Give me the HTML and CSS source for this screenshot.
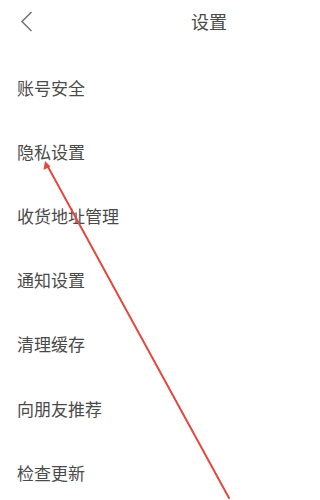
FILE: index.html
```html
<!DOCTYPE html>
<html lang="zh-CN">
<head>
<meta charset="utf-8">
<link rel="stylesheet" href="styles.css">
</head>
<body>
<div class="page">
  <header class="topbar">
    <svg class="back" width="13" height="21" viewBox="0 0 13 21"><path d="M11.5 1 L2 10.5 L11.5 20" fill="none" stroke="#777" stroke-width="1.6"/></svg>
    <div class="title">设置</div>
  </header>
  <ul class="menu">
    <li>账号安全</li>
    <li>隐私设置</li>
    <li>收货地址管理</li>
    <li>通知设置</li>
    <li>清理缓存</li>
    <li>向朋友推荐</li>
    <li>检查更新</li>
  </ul>
  <svg class="annot" width="273" height="500" viewBox="0 0 273 500">
    <line x1="47" y1="165" x2="229" y2="498" stroke="#e04a40" stroke-width="2" stroke-linecap="round"/>
    <path d="M45 161 L43.5 170 L50.5 166.5 Z" fill="#e04a40"/>
  </svg>
</div>
</body>
</html>
```
FILE: styles.css
```css
html, body {
  margin: 0;
  padding: 0;
  background: #fff;
}
.page {
  position: relative;
  width: 273px;
  height: 500px;
  overflow: hidden;
  font-family: "Noto Sans CJK SC", "Noto Sans", sans-serif;
  color: #4a4a4a;
}
.topbar {
  height: 42px;
  display: flex;
  align-items: center;
  padding-left: 20px;
}
.back {
  display: block;
}
.title {
  margin-left: 158px;
  font-size: 18px;
  color: #4a4a4a;
  line-height: 1;
}
.menu {
  list-style: none;
  margin: 13px 0 0;
  padding: 0;
}
.menu li {
  height: 64.2px;
  display: flex;
  align-items: center;
  padding-left: 17px;
  font-size: 17px;
  line-height: 1;
}
.annot {
  position: absolute;
  left: 0;
  top: 0;
  pointer-events: none;
}
```
